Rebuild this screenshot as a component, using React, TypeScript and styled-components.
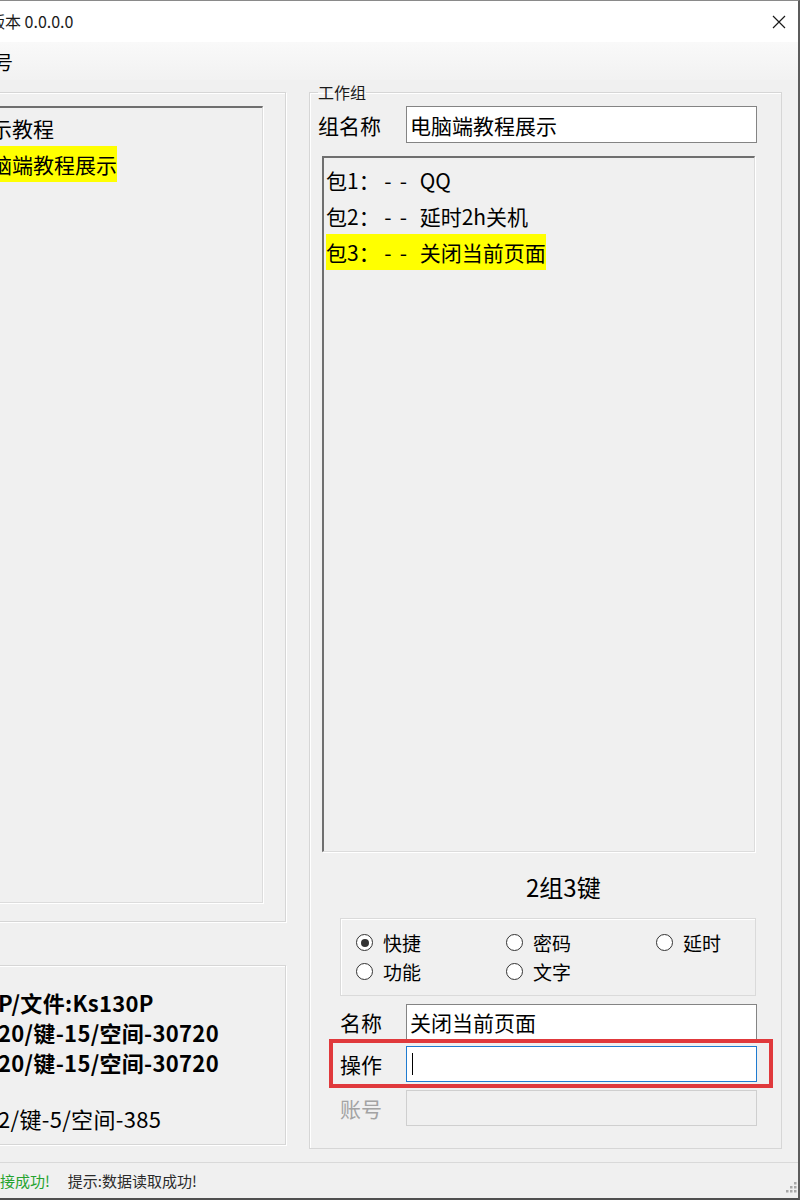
import React from 'react';
import styled, { createGlobalStyle } from 'styled-components';

const GlobalStyle = createGlobalStyle`
  html, body {
    margin: 0;
    padding: 0;
    background: #f0f0f0;
    overflow: hidden;
  }
  body {
    font-family: "Noto Sans CJK SC", "Noto Sans", sans-serif;
    color: #000;
  }
  * {
    box-sizing: border-box;
  }
`;

const Window = styled.div`
  width: 800px;
  height: 1200px;
  display: flex;
  flex-direction: column;
  background: #f0f0f0;
  border-top: 1px solid #8a8a8a;
  border-right: 2px solid #5c5c5c;
  border-bottom: 2px solid #4f4f4f;
  overflow: hidden;
`;

const TitleBar = styled.div`
  height: 41px;
  flex-shrink: 0;
  display: flex;
  align-items: center;
  padding-right: 12px;
  background: #fff;
`;

const Title = styled.div`
  margin-left: -11px;
  margin-top: -2px;
  font-size: 16px;
  color: #1a1a1a;
  white-space: nowrap;
`;

const CloseButton = styled.svg`
  margin-left: auto;
  width: 14px;
  height: 14px;
`;

const MenuBar = styled.div`
  height: 38px;
  flex-shrink: 0;
  display: flex;
  align-items: center;
  background: linear-gradient(#f9f9f9, #f2f2f2);
`;

const MenuItem = styled.span`
  margin-left: -25px;
  font-size: 19px;
  white-space: nowrap;
`;

const Body = styled.div`
  flex: 1;
  display: flex;
  min-height: 0;
`;

const LeftColumn = styled.div`
  width: 346px;
  margin-left: -60px;
  flex-shrink: 0;
  display: flex;
  flex-direction: column;
`;

const Group = styled.div<{ $height: number; $top: number }>`
  height: ${(p) => p.$height}px;
  margin-top: ${(p) => p.$top}px;
  border: 1px solid #d6d6d6;
  box-shadow: inset 1px 1px 0 #fff, 1px 1px 0 #fff;
  display: flex;
  flex-direction: column;
`;

const DeviceGroup = styled(Group)`
  padding: 13px 22px 18px 12px;
`;

const SunkenList = styled.div`
  flex: 1;
  display: flex;
  flex-direction: column;
  align-items: flex-start;
  background: #f0f0f0;
  border-top: 2px solid #6f6f6f;
  border-left: 2px solid #6f6f6f;
  border-right: 1px solid #dcdcdc;
  border-bottom: 1px solid #dcdcdc;
  box-shadow: 1px 1px 0 #fff;
`;

const GroupList = styled(SunkenList)`
  padding: 2px 0 0 15px;
`;

const ListItem = styled.div<{ $selected?: boolean }>`
  height: 36px;
  line-height: 36px;
  font-size: 21px;
  white-space: pre;
  background: ${(p) => (p.$selected ? '#ffff00' : 'transparent')};
`;

const Dash = styled.span`
  letter-spacing: 8px;
`;

const InfoGroup = styled(Group)`
  padding: 21px 0 0 57px;
`;

const InfoLine = styled.div<{ $bold?: boolean; $gap?: number }>`
  font-size: 22px;
  line-height: 30px;
  letter-spacing: 0.3px;
  font-weight: ${(p) => (p.$bold ? 700 : 400)};
  margin-top: ${(p) => p.$gap ?? 0}px;
  white-space: nowrap;
`;

const WorkGroup = styled.fieldset`
  width: 473px;
  height: 1067px;
  min-width: 0;
  margin: 2px 0 0 23px;
  padding: 4px 24px 21px 8px;
  border: 1px solid #d6d6d6;
  box-shadow: inset 1px 1px 0 #fff;
  display: flex;
  flex-direction: column;
  flex-shrink: 0;
`;

const Legend = styled.legend`
  padding: 0;
  font-size: 16px;
  line-height: 20px;
  color: #1a1a1a;
`;

const FieldRow = styled.div<{ $indent: number; $labelWidth: number; $top?: number }>`
  position: relative;
  display: flex;
  align-items: center;
  margin-left: ${(p) => p.$indent}px;
  margin-top: ${(p) => p.$top ?? 0}px;

  & > label {
    width: ${(p) => p.$labelWidth}px;
    flex-shrink: 0;
  }
`;

const FieldLabel = styled.label<{ $disabled?: boolean }>`
  font-size: 21px;
  color: ${(p) => (p.$disabled ? '#a3a3a3' : '#000')};
`;

const TextBox = styled.div<{ $state?: 'focus' | 'disabled'; $height: number }>`
  flex: 1;
  height: ${(p) => p.$height}px;
  display: flex;
  align-items: center;
  padding-left: 3px;
  font-size: 21px;
  white-space: nowrap;
  background: ${(p) => (p.$state === 'disabled' ? '#f0f0f0' : '#fff')};
  border: 1px solid
    ${(p) => (p.$state === 'focus' ? '#1f7bd0' : p.$state === 'disabled' ? '#cfcfcf' : '#848484')};
`;

const Caret = styled.span`
  width: 1px;
  height: 22px;
  margin-left: 2px;
  background: #000;
`;

const Marker = styled.div`
  position: absolute;
  top: -7px;
  left: -11px;
  right: -16px;
  bottom: -6px;
  border: 4px solid #e0393c;
  pointer-events: none;
`;

const PackList = styled(SunkenList)`
  height: 696px;
  flex: none;
  margin: 13px 2px 0 4px;
  padding: 4px 0 0 2px;
`;

const Counter = styled.div`
  margin-top: 19px;
  padding-left: 208px;
  font-size: 24px;
  line-height: 32px;
`;

const TypeBox = styled.div`
  height: 78px;
  margin: 15px 1px 0 22px;
  padding: 9px 0 0 15px;
  border: 1px solid #dadada;
  box-shadow: inset 1px 1px 0 #fff;
  display: grid;
  grid-template-columns: repeat(3, 150px);
  grid-auto-rows: 29px;
`;

const Radio = styled.div`
  display: flex;
  align-items: center;
  gap: 10px;
  font-size: 19px;
`;

const RadioDot = styled.span<{ $checked?: boolean }>`
  width: 17px;
  height: 17px;
  border-radius: 50%;
  border: 1.5px solid #333;
  background: #fff;
  display: inline-flex;
  align-items: center;
  justify-content: center;

  &::after {
    content: '';
    width: 8px;
    height: 8px;
    border-radius: 50%;
    background: #333;
    display: ${(p) => (p.$checked ? 'block' : 'none')};
  }
`;

const StatusBar = styled.div`
  height: 36px;
  flex-shrink: 0;
  display: flex;
  align-items: center;
  border-top: 1px solid #d9d9d9;
  font-size: 15px;
  white-space: nowrap;
`;

const StatusText = styled.span<{ $tone?: 'ok'; $offset: number }>`
  margin-left: ${(p) => p.$offset}px;
  color: ${(p) => (p.$tone === 'ok' ? '#25a32f' : '#2b2b2b')};
`;

const Grip = styled.svg`
  margin-left: auto;
  align-self: flex-end;
  margin-bottom: 2px;
  width: 16px;
  height: 16px;
`;

const groups = [
  { label: '演示教程' },
  { label: '电脑端教程展示', selected: true },
];

const packs = [
  { id: 1, name: 'QQ' },
  { id: 2, name: '延时2h关机' },
  { id: 3, name: '关闭当前页面', selected: true },
];

const keyTypes = [
  { label: '快捷', checked: true },
  { label: '密码' },
  { label: '延时' },
  { label: '功能' },
  { label: '文字' },
];

const gripDots = [
  [12, 0],
  [8, 4],
  [12, 4],
  [4, 8],
  [8, 8],
  [12, 8],
];

export default function App() {
  return (
    <>
      <GlobalStyle />
      <Window>
        <TitleBar>
          <Title>版本 0.0.0.0</Title>
          <CloseButton viewBox="0 0 14 14">
            <path d="M1 1 L13 13 M13 1 L1 13" stroke="#1a1a1a" strokeWidth="1.2" />
          </CloseButton>
        </TitleBar>
        <MenuBar>
          <MenuItem>账号</MenuItem>
        </MenuBar>
        <Body>
          <LeftColumn>
            <DeviceGroup $height={830} $top={12}>
              <GroupList>
                {groups.map((g) => (
                  <ListItem key={g.label} $selected={g.selected}>
                    {g.label}
                  </ListItem>
                ))}
              </GroupList>
            </DeviceGroup>
            <InfoGroup $height={180} $top={43}>
              <InfoLine $bold>P/文件:Ks130P</InfoLine>
              <InfoLine $bold>20/键-15/空间-30720</InfoLine>
              <InfoLine $bold>20/键-15/空间-30720</InfoLine>
              <InfoLine $gap={26}>2/键-5/空间-385</InfoLine>
            </InfoGroup>
          </LeftColumn>

          <WorkGroup>
            <Legend>工作组</Legend>
            <FieldRow $indent={0} $labelWidth={88}>
              <FieldLabel>组名称</FieldLabel>
              <TextBox $height={37}>电脑端教程展示</TextBox>
            </FieldRow>

            <PackList>
              {packs.map((p) => (
                <ListItem key={p.id} $selected={p.selected}>
                  {`包${p.id}： `}
                  <Dash>--</Dash>
                  {` ${p.name}`}
                </ListItem>
              ))}
            </PackList>

            <Counter>2组3键</Counter>

            <TypeBox>
              {keyTypes.map((t) => (
                <Radio key={t.label}>
                  <RadioDot $checked={t.checked} />
                  {t.label}
                </Radio>
              ))}
            </TypeBox>

            <FieldRow $indent={22} $labelWidth={66} $top={8}>
              <FieldLabel>名称</FieldLabel>
              <TextBox $height={36}>关闭当前页面</TextBox>
            </FieldRow>
            <FieldRow $indent={22} $labelWidth={66} $top={6}>
              <FieldLabel>操作</FieldLabel>
              <TextBox $height={36} $state="focus">
                <Caret />
              </TextBox>
              <Marker />
            </FieldRow>
            <FieldRow $indent={22} $labelWidth={66} $top={8}>
              <FieldLabel $disabled>账号</FieldLabel>
              <TextBox $height={36} $state="disabled" />
            </FieldRow>
          </WorkGroup>
        </Body>
        <StatusBar>
          <StatusText $tone="ok" $offset={-15}>
            连接成功!
          </StatusText>
          <StatusText $offset={18}>提示:数据读取成功!</StatusText>
          <Grip viewBox="0 0 16 16">
            {gripDots.map(([x, y]) => (
              <rect key={`${x}-${y}`} x={x} y={y + 2} width="2.5" height="2.5" fill="#a8a8a8" />
            ))}
          </Grip>
        </StatusBar>
      </Window>
    </>
  );
}
